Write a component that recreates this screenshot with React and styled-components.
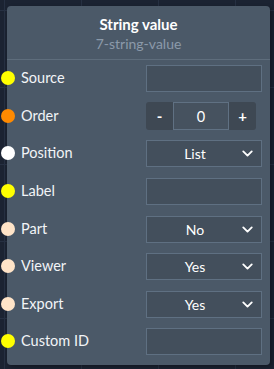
import React from "react";
import styled, { createGlobalStyle } from "styled-components";
import { ChevronDown } from "lucide-react";

const GlobalStyle = createGlobalStyle`
  html, body {
    margin: 0;
    padding: 0;
    background-color: #1b2332;
    background-image:
      linear-gradient(#263042 1px, transparent 1px),
      linear-gradient(90deg, #263042 1px, transparent 1px);
    background-size: 77px 77px;
    background-position: 4px 10px;
    font-family: Lato, "Open Sans", sans-serif;
  }
`;

const Page = styled.div`
  width: 274px;
  height: 369px;
  padding: 6px 4px 0 7px;
  box-sizing: border-box;
`;

const Card = styled.div`
  width: 263px;
  background: #4b5968;
  border-radius: 4px;
  box-shadow: 2px 2px 4px rgba(0, 0, 0, 0.35);
  padding-bottom: 4px;
`;

const Header = styled.div`
  display: flex;
  flex-direction: column;
  align-items: center;
  padding-top: 8px;
  height: 45px;
  border-bottom: 1px solid #5e6d7c;
`;

const Title = styled.div`
  color: #ffffff;
  font-weight: 700;
  font-size: 15px;
  line-height: 20px;
`;

const Subtitle = styled.div`
  color: #8b9aaa;
  font-size: 14px;
  line-height: 20px;
`;

const Row = styled.div`
  position: relative;
  display: flex;
  align-items: center;
  justify-content: space-between;
  height: 37.6px;
  padding: 0 8px 0 14px;
`;

const Dot = styled.span`
  position: absolute;
  left: -6px;
  top: 50%;
  width: 14px;
  height: 14px;
  margin-top: -7.5px;
  border-radius: 50%;
  background: ${(p) => p.$color};
`;

const Label = styled.span`
  color: #f2f4f7;
  font-size: 14.5px;
  margin-top: -2px;
`;

const TextBox = styled.div`
  width: 116px;
  height: 27px;
  box-sizing: border-box;
  background: #434f5c;
  border: 1px solid #5f7082;
`;

const Select = styled.div`
  width: 116px;
  height: 27px;
  box-sizing: border-box;
  background: #434f5c;
  border: 1px solid #5f7082;
  display: flex;
  align-items: center;
  color: #ffffff;
  font-size: 14px;
  padding: 0 5px 0 0;
`;

const SelectValue = styled.span`
  flex: 1;
  text-align: center;
  padding-left: 4px;
`;

const Stepper = styled.div`
  display: flex;
  height: 28px;
  width: 110px;
  margin-right: 6px;
`;

const StepButton = styled.div`
  width: 27px;
  display: flex;
  align-items: center;
  justify-content: center;
  background: #3e4853;
  color: #ffffff;
  font-weight: 700;
  font-size: 15px;
  border-radius: ${(p) => (p.$side === "left" ? "3px 0 0 3px" : "0 3px 3px 0")};
`;

const StepValue = styled.div`
  flex: 1;
  box-sizing: border-box;
  display: flex;
  align-items: center;
  justify-content: center;
  background: #46525f;
  border: 1px solid #607183;
  color: #ffffff;
  font-size: 14.5px;
`;

const fields = [
  { label: "Source", color: "#ffff00", kind: "text" },
  { label: "Order", color: "#ff8a00", kind: "stepper", value: "0" },
  { label: "Position", color: "#ffffff", kind: "select", value: "List" },
  { label: "Label", color: "#ffff00", kind: "text" },
  { label: "Part", color: "#ffe4c8", kind: "select", value: "No" },
  { label: "Viewer", color: "#ffe4c8", kind: "select", value: "Yes" },
  { label: "Export", color: "#ffe4c8", kind: "select", value: "Yes" },
  { label: "Custom ID", color: "#ffff00", kind: "text" },
];

const Control = ({ field }) => {
  if (field.kind === "stepper") {
    return (
      <Stepper>
        <StepButton $side="left">-</StepButton>
        <StepValue>{field.value}</StepValue>
        <StepButton $side="right">+</StepButton>
      </Stepper>
    );
  }
  if (field.kind === "select") {
    return (
      <Select>
        <SelectValue>{field.value}</SelectValue>
        <ChevronDown size={17} strokeWidth={2.6} color="#ffffff" />
      </Select>
    );
  }
  return <TextBox />;
};

export default function App() {
  return (
    <Page>
      <GlobalStyle />
      <Card>
        <Header>
          <Title>String value</Title>
          <Subtitle>7-string-value</Subtitle>
        </Header>
        {fields.map((f) => (
          <Row key={f.label}>
            <Dot $color={f.color} />
            <Label>{f.label}</Label>
            <Control field={f} />
          </Row>
        ))}
      </Card>
    </Page>
  );
}
